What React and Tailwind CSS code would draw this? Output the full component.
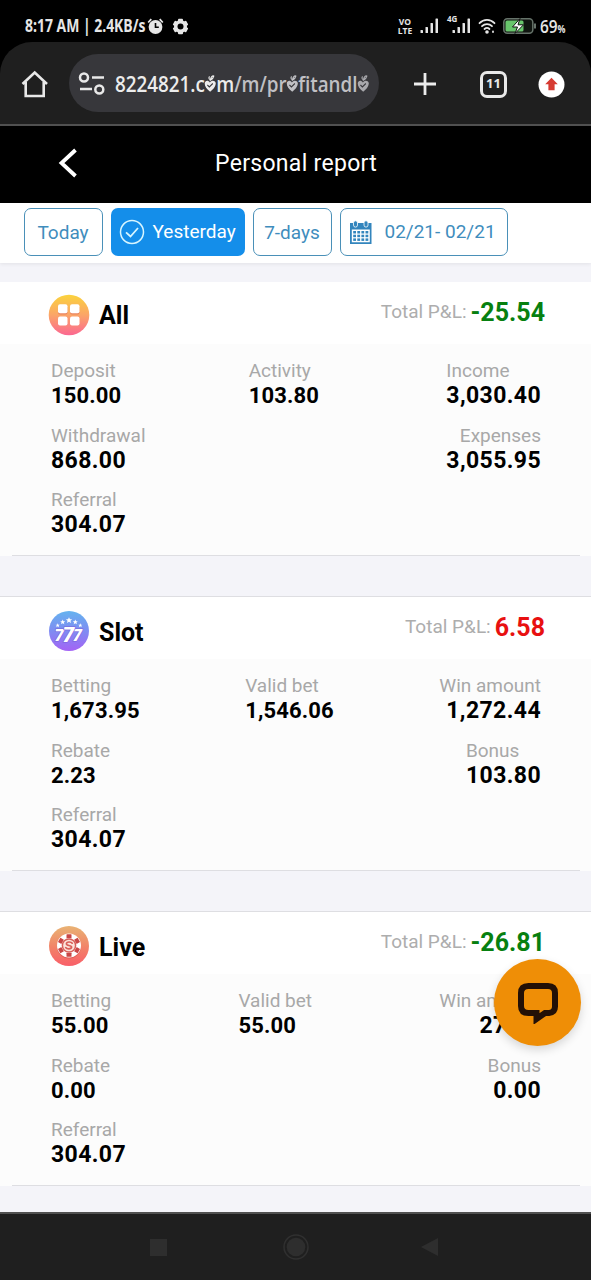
import React from "react";

const reports = [
  {
    title: "All",
    icon: "all",
    total: "-25.54",
    first: true,
    rows: [
      [
        { label: "Deposit", value: "150.00", compact: true },
        { label: "Activity", value: "103.80", compact: true },
        { label: "Income", value: "3,030.40" },
      ],
      [
        { label: "Withdrawal", value: "868.00" },
        { label: "Expenses", value: "3,055.95", right: true },
      ],
      [{ label: "Referral", value: "304.07" }],
    ],
  },
  {
    title: "Slot",
    icon: "slot",
    total: "6.58",
    rows: [
      [
        { label: "Betting", value: "1,673.95", compact: true },
        { label: "Valid bet", value: "1,546.06", compact: true },
        { label: "Win amount", value: "1,272.44", right: true },
      ],
      [
        { label: "Rebate", value: "2.23", compact: true },
        { label: "Bonus", value: "103.80" },
      ],
      [{ label: "Referral", value: "304.07" }],
    ],
  },
  {
    title: "Live",
    icon: "live",
    total: "-26.81",
    rows: [
      [
        { label: "Betting", value: "55.00", compact: true },
        { label: "Valid bet", value: "55.00", compact: true },
        { label: "Win amount", value: "27.80", right: true },
      ],
      [
        { label: "Rebate", value: "0.00", compact: true },
        { label: "Bonus", value: "0.00", right: true },
      ],
      [{ label: "Referral", value: "304.07" }],
    ],
  },
];

const AllIcon = () => (
  <svg width="42" height="42" viewBox="0 0 42 42">
    <defs>
      <linearGradient id="allBg" x1="0" y1="0" x2="0" y2="1">
        <stop offset="0" stopColor="#fbd33c" />
        <stop offset="0.5" stopColor="#fba568" />
        <stop offset="1" stopColor="#fb6791" />
      </linearGradient>
    </defs>
    <circle cx="21" cy="21" r="20.3" fill="url(#allBg)" />
    <g fill="#e0705f" opacity="0.6">
      <rect x="10" y="11.5" width="9.5" height="9" rx="2" />
      <rect x="22" y="11.5" width="9.5" height="9" rx="2" />
    </g>
    <g fill="#fff">
      <rect x="10" y="10.3" width="9.5" height="9" rx="2" />
      <rect x="22" y="10.3" width="9.5" height="9" rx="2" />
      <rect x="10" y="22.6" width="9.5" height="9" rx="2" />
      <rect x="22" y="22.6" width="9.5" height="9" rx="2" />
    </g>
  </svg>
);

const star = "M0-2.6L.8-.8 2.6-.8 1.2.4 1.7 2.3 0 1.2-1.7 2.3-1.2.4-2.6-.8-.8-.8Z";

const SlotIcon = () => (
  <svg width="42" height="42" viewBox="0 0 42 42">
    <defs>
      <linearGradient id="slotBg" x1="0" y1="0" x2="0" y2="1">
        <stop offset="0" stopColor="#65b3ef" />
        <stop offset="0.5" stopColor="#7f8cf2" />
        <stop offset="1" stopColor="#a463f5" />
      </linearGradient>
    </defs>
    <circle cx="21" cy="21" r="20" fill="url(#slotBg)" />
    <g fill="#fff">
      <path d={star} transform="translate(9.7 15.3) scale(.8)" />
      <path d={star} transform="translate(14.7 12) scale(.95)" />
      <path d={star} transform="translate(21 10.3) scale(1.2)" />
      <path d={star} transform="translate(27.3 12) scale(.95)" />
      <path d={star} transform="translate(32.3 15.3) scale(.8)" />
    </g>
    <g fontFamily="Roboto, sans-serif" fontWeight="900" fontStyle="italic" stroke="#7b62dc" strokeWidth="1.2" paintOrder="stroke" fill="#fff">
      <text x="6.5" y="30.5" fontSize="17">7</text>
      <text x="24.5" y="30.5" fontSize="17">7</text>
      <text x="14.5" y="31.5" fontSize="21">7</text>
    </g>
  </svg>
);

const LiveIcon = () => (
  <svg width="42" height="42" viewBox="0 0 42 42">
    <defs>
      <linearGradient id="liveBg" x1="0" y1="0" x2="0" y2="1">
        <stop offset="0" stopColor="#e9b374" />
        <stop offset="0.55" stopColor="#f28168" />
        <stop offset="1" stopColor="#f95f69" />
      </linearGradient>
    </defs>
    <circle cx="21" cy="21" r="20" fill="url(#liveBg)" />
    <circle cx="21" cy="21.6" r="12" fill="#cf4f48" opacity="0.6" />
    <circle cx="21" cy="20.5" r="12" fill="#fff" />
    {[0, 60, 120, 180, 240, 300].map((angle) => (
      <rect key={angle} x="18.5" y="9.2" width="5" height="4" rx="0.5" fill="#c94747" transform={`rotate(${angle} 21 20.5)`} />
    ))}
    <circle cx="21" cy="20.5" r="6.6" fill="#fbe3dc" stroke="#d9605a" strokeWidth="1.5" />
    <path
      d="M24.2 18.2c-1-1.6-5.6-1.8-5.8.6-.2 2.2 5.4 1.2 5.2 3.4-.2 2.2-4.8 2-5.9.4"
      fill="none"
      stroke="#d9605a"
      strokeWidth="1.7"
      strokeLinecap="round"
    />
  </svg>
);

const icons = { all: AllIcon, slot: SlotIcon, live: LiveIcon };

// the phone's theme font swaps every "o" for a small heart
const HeartO = ({ color }) => (
  <span className="relative inline-block text-transparent">
    o
    <svg className="absolute -left-px top-[5px]" width="15" height="20" viewBox="0 0 13 17">
      <path d="M6.3 16C3 14 .6 11.500 .8 8.800 1 6.200 4.400 5.600 6 8c2-2.600 6.300-1.400 6 1.200C11.700 12 9 14.300 6.300 16Z" fill={color} />
      <path d="M3.500 10.300l2 1.700L9 9" stroke="#37373b" strokeWidth="1.100" fill="none" />
      <path d="M6 5.500C4.600 4.600 5 3 6 3.200M6.500 6C7 3.500 8.500 2 10 2.500 9.800 4 8.500 5 6.500 6Z" stroke={color} strokeWidth="1.100" fill="none" />
    </svg>
  </span>
);

const Signal = () => (
  <svg width="19" height="16" viewBox="0 0 19 16" fill="#e6e6e6">
    <rect x="0.5" y="12" width="2.5" height="3" rx="0.6" />
    <rect x="5.5" y="9" width="2.5" height="6" rx="0.6" />
    <rect x="10.5" y="5" width="2.5" height="10" rx="0.6" />
    <rect x="15.5" y="0.5" width="2.5" height="14.5" rx="0.6" />
  </svg>
);

const StatusBar = () => (
  <div className="flex h-[42px] items-center pl-[25px] pr-6 pt-[10px] font-['Open_Sans',sans-serif] text-[#e6e6e6]">
    <div className="w-[122px]">
      <span className="inline-block origin-left scale-x-[0.82] whitespace-nowrap text-[17px] font-bold">8:17 AM | 2.4KB/s</span>
    </div>
    <svg width="17" height="17" viewBox="0 0 17 17">
      <path d="M1.2 4.5L4.3 1.2M15.8 4.5L12.7 1.2" stroke="#e6e6e6" strokeWidth="1.8" />
      <circle cx="8.5" cy="9" r="6.9" fill="#e6e6e6" />
      <path d="M8.5 5v4.2h3.3" fill="none" stroke="#000" strokeWidth="1.6" />
    </svg>
    <svg className="ml-[8px]" width="17" height="17" viewBox="0 0 17 17">
      {[0, 60, 120].map((angle) => (
        <rect key={angle} x="6" y="0.8" width="5" height="15.4" rx="1" fill="#e6e6e6" transform={`rotate(${angle} 8.5 8.5)`} />
      ))}
      <circle cx="8.5" cy="8.5" r="4.8" fill="none" stroke="#e6e6e6" strokeWidth="3.4" />
      <circle cx="8.5" cy="8.5" r="3" fill="#000" />
    </svg>
    <div className="ml-auto flex items-center">
      <div className="w-4 text-center text-[8.5px] font-bold leading-[9px]">
        <div>VO</div>
        <div>LTE</div>
      </div>
      <div className="ml-[7px] flex">
        <Signal />
      </div>
      <div className="relative ml-[13px] flex">
        <span className="absolute -left-[5px] -top-[4px] text-[8px] font-bold leading-[10px]">4G</span>
        <Signal />
      </div>
      <svg className="ml-[7px]" width="18" height="16" viewBox="0 0 18 16" fill="none" stroke="#e6e6e6" strokeWidth="1.8" strokeLinecap="round">
        <path d="M1.5 5.2C5.7 .8 12.3.8 16.5 5.2M4 8.200c2.9-2.9 7.1-2.9 10 0M6.5 11c1.5-1.4 3.5-1.4 5 0" />
        <circle cx="9" cy="14" r="0.9" fill="#e6e6e6" />
        <path d="M15 13.500v.5" />
      </svg>
      <svg className="ml-[7px]" width="34" height="18" viewBox="0 0 34 18">
        <rect x="0.8" y="1.7" width="29" height="14.6" rx="3.5" fill="#101510" stroke="#66736a" strokeWidth="1.5" />
        <rect x="2.5" y="3.5" width="18" height="11" rx="1.5" fill="#68c66c" />
        <path d="M32 6.5v5" stroke="#66736a" strokeWidth="2" />
        <path d="M17 1.5L9.5 10h5l-2.5 6.5 8.500-8.700h-5.500Z" fill="#fff" stroke="#101510" strokeWidth="1" />
      </svg>
      <div className="ml-[3px] w-[27px] whitespace-nowrap">
        <span className="inline-block origin-left scale-x-[0.88] text-[17.5px] font-semibold">
          69<span className="text-[10px] font-bold">%</span>
        </span>
      </div>
    </div>
  </div>
);

const BrowserBar = () => (
  <div className="flex h-[84px] items-center rounded-t-[32px] border-b-2 border-[#505050] bg-[#1f1f1f]">
    <svg className="ml-[21px] mt-[2px] shrink-0" width="28" height="28" viewBox="0 0 28 28" fill="none" stroke="#e8e8e8" strokeWidth="2.6">
      <path d="M1.500 14L13.700 2.500 26 14M4.700 12v14h18V12" />
    </svg>
    <div className="ml-5 flex h-[58px] w-[310px] shrink-0 items-center overflow-hidden rounded-full bg-[#37373b] pl-[9px]">
      <svg className="mt-[2px] shrink-0" width="28" height="26" viewBox="0 0 28 26" fill="none" stroke="#e8e8e8" strokeWidth="2.5">
        <circle cx="6" cy="6.5" r="4" />
        <path d="M14 6.5h12M2 18h12" />
        <circle cx="21.3" cy="18.5" r="4" />
      </svg>
      <div className="ml-[9px] w-[256px]">
        <div className="origin-left scale-x-[0.855] whitespace-nowrap font-['Open_Sans',sans-serif] text-[22px] font-semibold leading-[30px] text-[#c0c0c4]">
          <span className="text-[#ececec]">
            8224821.c
            <HeartO color="#ececec" />m
          </span>
          /m/pr
          <HeartO color="#c0c0c4" />
          fitandl
          <HeartO color="#a8a8ac" />
        </div>
      </div>
    </div>
    <svg className="ml-[34px] mt-[2px] shrink-0" width="24" height="24" viewBox="0 0 24 24" stroke="#ececec" strokeWidth="2.8">
      <path d="M12 1v22M1 12h22" />
    </svg>
    <div className="ml-[43px] mt-[2px] flex h-[27px] w-[27px] shrink-0 items-center justify-center rounded-[7px] border-3 border-[#e8e8e8] font-['Open_Sans',sans-serif] text-[13px] font-bold text-[#e8e8e8]">
      11
    </div>
    <svg className="ml-[31px] mt-[2px] shrink-0" width="27" height="27" viewBox="0 0 27 27">
      <circle cx="13.5" cy="13.5" r="13" fill="#fff" />
      <path d="M13.5 6.8l6.3 6.5h-3.2v6h-6.2v-6H7.2Z" fill="#d63a31" />
    </svg>
  </div>
);

const FilterBar = () => (
  <div className="relative flex h-[60px] gap-2 bg-white pl-[23.5px] pt-[5px] text-[19px] text-[#3f8dbd] shadow-[0_1px_4px_rgba(0,0,0,0.08)]">
    <button className="h-[48px] w-[79px] rounded-[7px] border border-[#4a90b8] pt-[2px]">Today</button>
    <button className="flex h-[48px] w-[134px] items-center rounded-[7px] bg-[#148eea] pl-[8px] text-white">
      <svg width="26" height="26" viewBox="0 0 26 26" fill="none" stroke="#d8f6ff" strokeWidth="1.5">
        <circle cx="13" cy="13" r="11.5" />
        <path d="M7 13.3l4.5 4.2 7.5-8.5" strokeWidth="1.8" />
      </svg>
      <span className="ml-[8px]">Yesterday</span>
    </button>
    <button className="h-[48px] w-[79px] rounded-[7px] border border-[#4a90b8] pt-[2px]">7-days</button>
    <button className="flex h-[48px] w-[168px] items-center rounded-[7px] border border-[#4a90b8] pl-[8px]">
      <svg width="24" height="25" viewBox="0 0 24 25" fill="#3385bd">
        <path d="M1 3H22.500V24H1Zm1.800 6.500V22.300h18V9.500Z" fillRule="evenodd" />
        <rect x="4.5" y="0.8" width="4" height="6.3" rx="2" stroke="#fff" strokeWidth="0.8" />
        <rect x="15" y="0.8" width="4" height="6.3" rx="2" stroke="#fff" strokeWidth="0.8" />
        {[11, 14.7, 18.4].map((y) =>
          [4.2, 8.3, 12.4, 16.5].map((x) => <rect key={`${x}-${y}`} x={x} y={y} width="2.8" height="2.5" />)
        )}
      </svg>
      <span className="ml-[12px] whitespace-nowrap">02/21- 02/21</span>
    </button>
  </div>
);

const ReportCard = ({ report }) => {
  const Icon = icons[report.icon];
  const totalColor = report.total.startsWith("-") ? "text-[#078010]" : "text-[#e81010]";

  return (
    <div className={report.first ? "mt-[19px] bg-white" : "mt-[40px] border-t border-[#dedee2] bg-white"}>
      <div className="flex h-[62px] items-center pl-12 pr-[46px]">
        <div className={report.first ? "flex items-center pt-[3px]" : "flex items-center pt-[5px]"}>
          <Icon />
          <h2 className={report.first ? "ml-[9px] pt-[2px] text-[25px] font-bold" : "ml-[9px] pt-[4px] text-[25px] font-bold"}>
            {report.title}
          </h2>
        </div>
        <div className="ml-auto flex items-center whitespace-nowrap pb-px">
          <span className="text-[19px] text-[#adadad]">Total P&amp;L:</span>
          <span className={`ml-[4px] text-[25px] font-bold leading-8 ${totalColor}`}>{report.total}</span>
        </div>
      </div>
      <div className="h-[212px] bg-[#fcfcfc] pl-3 pr-[11px]">
        <div className="flex h-full flex-col gap-[15.5px] border-b border-[#dedee2] pl-[39px] pr-[39px] pt-[15px]">
          {report.rows.map((row, i) => (
            <div key={i} className="flex justify-between">
              {row.map((item) => (
                <div key={item.label} className={item.right ? "text-right" : ""}>
                  <div className="text-[19px] leading-6 text-[#a8a8a8]">{item.label}</div>
                  <div
                    className={
                      item.compact
                        ? "text-[22px] font-bold leading-[25px] tracking-[0.15px]"
                        : "text-[23px] font-bold leading-[25px] tracking-[0.4px]"
                    }
                  >
                    {item.value}
                  </div>
                </div>
              ))}
            </div>
          ))}
        </div>
      </div>
    </div>
  );
};

const NavBar = () => (
  <div className="flex h-[68px] items-center border-t-2 border-[#505050] bg-[#1f1f1f] pl-[150px]">
    <div className="h-[17px] w-[17px] bg-[#2e2e2e]"></div>
    <svg className="ml-[116px]" width="26" height="26" viewBox="0 0 26 26">
      <circle cx="13" cy="13" r="12" fill="none" stroke="#303030" strokeWidth="1.5" />
      <circle cx="13" cy="13" r="9.3" fill="#2e2e2e" />
    </svg>
    <svg className="ml-[112px]" width="17" height="18" viewBox="0 0 17 18">
      <path d="M0 9L17 0v18Z" fill="#2e2e2e" />
    </svg>
  </div>
);

const App = () => {
  return (
    <div className="relative flex h-[1280px] w-[591px] flex-col overflow-hidden bg-black font-[Roboto,sans-serif]">
      <StatusBar />
      <BrowserBar />
      <header className="flex h-[77px] shrink-0 items-center pb-[3px] pl-[58px] text-white">
        <svg width="20" height="30" viewBox="0 0 20 30" fill="none" stroke="#fff" strokeWidth="3.8">
          <path d="M17.5 2L3.5 15l14 13" />
        </svg>
        <h1 className="ml-[137px] pt-[3px] text-[23px] tracking-[0.3px]">Personal report</h1>
      </header>
      <main className="min-h-0 flex-1 overflow-hidden bg-[#f4f4f9] text-black">
        <FilterBar />
        {reports.map((report) => (
          <ReportCard key={report.title} report={report} />
        ))}
      </main>
      <NavBar />
      <button className="absolute left-[494px] top-[959px] flex h-[87px] w-[87px] items-center justify-center rounded-full bg-[#ef8e06] shadow-[0_4px_10px_rgba(0,0,0,0.15)]">
        <svg width="42" height="42" viewBox="0 0 42 42">
          <path
            d="M11.5 4H31q7 0 7 7V24.500q0 6-6 6.500h-4l-8.500 6v-6h-8Q4 31 4 24V11q0-7 7.500-7Z"
            fill="none"
            stroke="#231006"
            strokeWidth="6"
          />
        </svg>
      </button>
    </div>
  );
};

export default App;
